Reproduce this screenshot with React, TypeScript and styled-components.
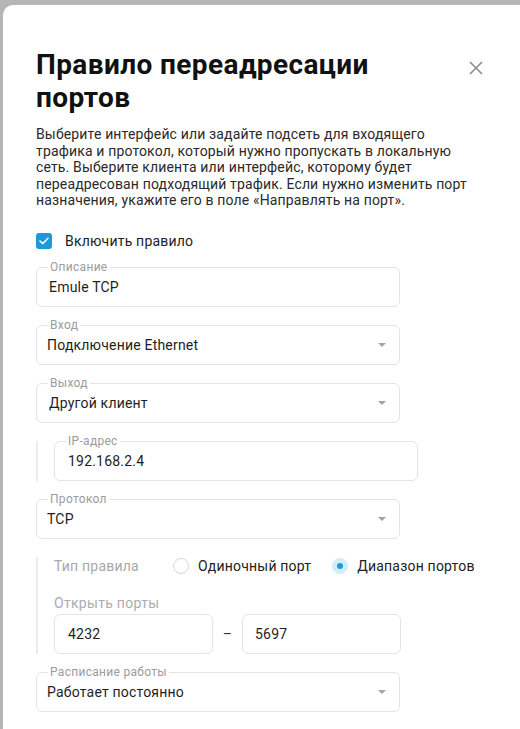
import React from "react";
import styled, { createGlobalStyle } from "styled-components";

const Global = createGlobalStyle`
  html, body { margin: 0; padding: 0; }
  body {
    width: 520px;
    height: 729px;
    overflow: hidden;
    background: #b6b6b6;
    font-family: Roboto, "Noto Sans", Arial, sans-serif;
  }
`;

const Modal = styled.div`
  margin: 5px 0 0 3px;
  width: 530px;
  height: 760px;
  box-sizing: border-box;
  background: #fff;
  border-radius: 10px 10px 0 0;
  padding: 43px 0 0 33px;
  color: #222;
`;

const Header = styled.div`
  display: flex;
  align-items: flex-start;
  width: 447px;
  justify-content: space-between;
`;

const Title = styled.h1`
  margin: 0;
  width: 400px;
  font-size: 28px;
  line-height: 33px;
  font-weight: 700;
  color: #111;
  letter-spacing: 0.4px;
`;

const Close = styled.button`
  border: 0;
  background: none;
  padding: 0;
  margin-top: 13px;
  width: 14px;
  height: 14px;
  display: flex;
  cursor: pointer;
`;

const Desc = styled.p`
  margin: 12px 0 0 0;
  width: 440px;
  font-size: 14px;
  line-height: 16.5px;
  letter-spacing: 0.15px;
  color: #2a2a2a;
`;

const Form = styled.div`
  margin-top: 24px;
  display: flex;
  flex-direction: column;
  gap: 18px;
  font-size: 14px;
  letter-spacing: 0.2px;
`;

const CheckRow = styled.label`
  display: flex;
  align-items: center;
  gap: 13px;
  color: #222;
  height: 16px;
`;

const CheckBox = styled.span`
  width: 16px;
  height: 16px;
  border-radius: 3px;
  background: #1c9ad6;
  display: flex;
  align-items: center;
  justify-content: center;
`;

const Field = styled.div<{ $w?: number }>`
  position: relative;
  width: ${(p) => p.$w ?? 364}px;
  height: 40px;
  box-sizing: border-box;
  border: 1px solid #e4e4e4;
  border-radius: 6px;
  display: flex;
  align-items: center;
  padding: 0 12px;
  color: #1e1e1e;
`;

const Value = styled.span<{ $pad?: number }>`
  margin-left: ${(p) => p.$pad ?? 0}px;
  flex: 1;
`;

const FloatLabel = styled.span`
  position: absolute;
  top: -8px;
  left: 11px;
  padding: 0 2px;
  background: #fff;
  font-size: 12px;
  line-height: 14px;
  letter-spacing: 0.3px;
  color: #9c9c9c;
`;

const Arrow = styled.span`
  width: 0;
  height: 0;
  border-left: 4px solid transparent;
  border-right: 4px solid transparent;
  border-top: 4px solid #a3a3a3;
  margin-right: 1px;
`;

const Nested = styled.div`
  border-left: 2px solid #ececec;
  padding-left: 16px;
  display: flex;
  flex-direction: column;
`;

const RadioRow = styled.div`
  display: flex;
  align-items: center;
  height: 18px;
`;

const TypeLabel = styled.span`
  width: 119px;
  color: #a8a8a8;
`;

const RadioOpt = styled.label`
  display: flex;
  align-items: center;
  gap: 9px;
  color: #222;
  margin-right: 21px;
`;

const Radio = styled.span<{ $on?: boolean }>`
  width: 16px;
  height: 16px;
  box-sizing: border-box;
  border-radius: 50%;
  border: 1px solid ${(p) => (p.$on ? "#d3ecf9" : "#d8d8d8")};
  background: ${(p) => (p.$on ? "#d3ecf9" : "#fff")};
  display: flex;
  align-items: center;
  justify-content: center;
  &::after {
    content: "";
    display: ${(p) => (p.$on ? "block" : "none")};
    width: 6px;
    height: 6px;
    border-radius: 50%;
    background: #1c9ad6;
  }
`;

const PortsLabel = styled.div`
  margin-top: 20px;
  font-size: 14px;
  letter-spacing: 0.3px;
  color: #acacac;
  line-height: 16px;
`;

const PortsRow = styled.div`
  margin-top: 3px;
  display: flex;
  align-items: center;
`;

const Dash = styled.span`
  width: 29px;
  text-align: center;
  color: #333;
`;

export default function App() {
  return (
    <>
      <Global />
      <Modal>
        <Header>
          <Title>Правило переадресации портов</Title>
          <Close aria-label="Закрыть">
            <svg width="14" height="14" viewBox="0 0 14 14">
              <path d="M1 1 L13 13 M13 1 L1 13" stroke="#8c8c8c" strokeWidth="1.6" fill="none" />
            </svg>
          </Close>
        </Header>
        <Desc>
          Выберите интерфейс или задайте подсеть для входящего трафика и протокол, который нужно
          пропускать в локальную сеть. Выберите клиента или интерфейс, которому будет
          переадресован подходящий трафик. Если нужно изменить порт назначения, укажите его в поле
          «Направлять на порт».
        </Desc>
        <Form>
          <CheckRow>
            <CheckBox>
              <svg width="10" height="8" viewBox="0 0 10 8">
                <path d="M1 4 L3.8 6.6 L9 1.2" stroke="#fff" strokeWidth="1.5" fill="none" strokeLinecap="round" strokeLinejoin="round" />
              </svg>
            </CheckBox>
            Включить правило
          </CheckRow>
          <Field>
            <FloatLabel>Описание</FloatLabel>
            <Value>Emule TCP</Value>
          </Field>
          <Field>
            <FloatLabel>Вход</FloatLabel>
            <Value $pad={-2}>Подключение Ethernet</Value>
            <Arrow />
          </Field>
          <Field>
            <FloatLabel>Выход</FloatLabel>
            <Value>Другой клиент</Value>
            <Arrow />
          </Field>
          <Nested>
            <Field>
              <FloatLabel>IP-адрес</FloatLabel>
              <Value $pad={1}>192.168.2.4</Value>
            </Field>
          </Nested>
          <Field>
            <FloatLabel>Протокол</FloatLabel>
            <Value $pad={-2}>TCP</Value>
            <Arrow />
          </Field>
          <Nested>
            <RadioRow>
              <TypeLabel>Тип правила</TypeLabel>
              <RadioOpt>
                <Radio />
                Одиночный порт
              </RadioOpt>
              <RadioOpt>
                <Radio $on />
                Диапазон портов
              </RadioOpt>
            </RadioRow>
            <PortsLabel>Открыть порты</PortsLabel>
            <PortsRow>
              <Field $w={159}>
                <Value $pad={1}>4232</Value>
              </Field>
              <Dash>–</Dash>
              <Field $w={159}>
                <Value>5697</Value>
              </Field>
            </PortsRow>
          </Nested>
          <Field>
            <FloatLabel>Расписание работы</FloatLabel>
            <Value $pad={-2}>Работает постоянно</Value>
            <Arrow />
          </Field>
        </Form>
      </Modal>
    </>
  );
}
